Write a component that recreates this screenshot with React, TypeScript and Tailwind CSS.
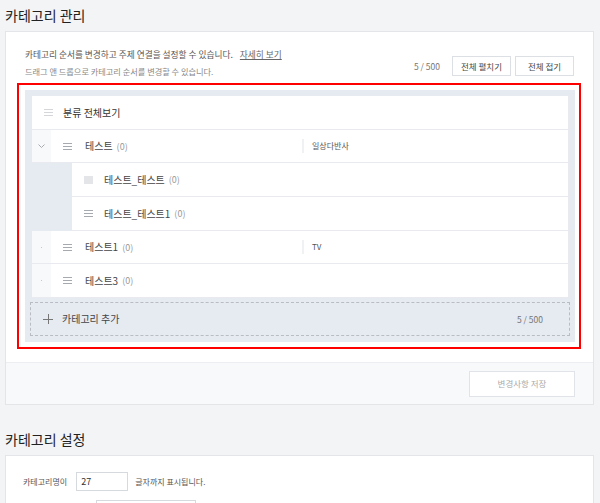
import React from "react";

const font = { fontFamily: '"Noto Sans CJK KR", "Noto Sans", sans-serif' };

const DragIcon = ({ light = false }: { light?: boolean }) => (
  <svg width="9" height="7" viewBox="0 0 9 7" className="shrink-0">
    <g stroke={light ? "#d4d6da" : "#a6a9ad"} strokeWidth="1">
      <line x1="0" y1="0.5" x2="9" y2="0.5" />
      <line x1="0" y1="3.5" x2="9" y2="3.5" />
      <line x1="0" y1="6.5" x2="9" y2="6.5" />
    </g>
  </svg>
);

type Row = {
  name: string;
  count?: string;
  topic?: string;
  child?: boolean;
  toggle?: "open" | "dot";
  square?: boolean;
  h: string;
};

const rows: Row[] = [
  { name: "테스트", count: "(0)", topic: "일상다반사", toggle: "open", h: "h-[33px]" },
  { name: "테스트_테스트", count: "(0)", child: true, square: true, h: "h-[34px]" },
  { name: "테스트_테스트1", count: "(0)", child: true, h: "h-[34px]" },
  { name: "테스트1", count: "(0)", topic: "TV", toggle: "dot", h: "h-[33px]" },
  { name: "테스트3", count: "(0)", toggle: "dot", h: "h-[34px]" },
];

const CategoryRow = ({ row }: { row: Row }) => {
  if (row.child) {
    return (
      <div className={`flex ${row.h} bg-[#e6eaf1]`}>
        <div className="ml-[40px] flex flex-1 items-center border-b border-[#e8eaef] bg-white pl-[12px]">
          {row.square ? (
            <span className="block h-[8px] w-[9px] bg-[#e4e5e8]" />
          ) : (
            <DragIcon />
          )}
          <span className="ml-[11px] text-[10px] leading-none text-[#444]">{row.name}</span>
          <span className="ml-[4px] text-[9px] leading-none text-[#999]">{row.count}</span>
        </div>
      </div>
    );
  }
  return (
    <div className={`flex ${row.h} border-b border-[#e8eaef] bg-white`}>
      <div className="flex w-[19px] items-center justify-center bg-[#f8f9fb]">
        {row.toggle === "open" ? (
          <svg width="7" height="4" viewBox="0 0 7 4">
            <path d="M0.5 0.5 L3.5 3.5 L6.5 0.5" fill="none" stroke="#a8abb0" strokeWidth="1" />
          </svg>
        ) : (
          <span className="block h-[1px] w-[1px] bg-[#c8c8c8]" />
        )}
      </div>
      <div className="flex flex-1 items-center">
        <div className="ml-[12px]">
          <DragIcon />
        </div>
        <div className="flex w-[230px] items-center pl-[13px]">
          <span className="text-[10px] leading-none text-[#444]">{row.name}</span>
          <span className="ml-[4px] text-[9px] leading-none text-[#999]">{row.count}</span>
        </div>
        {row.topic !== undefined && (
          <div className="flex items-center">
            <span className="block h-[14px] w-[2px] bg-[#f0f1f3]" />
            <span className="ml-[8px] text-[8px] leading-none text-[#555]">{row.topic}</span>
          </div>
        )}
      </div>
    </div>
  );
};

export default function App() {
  return (
    <div className="min-h-[503px] w-[600px] overflow-hidden bg-[#f3f4f6] pl-[5px]" style={font}>
      <h2 className="flex h-[31px] items-center text-[14px] font-normal text-[#222]">
        카테고리 관리
      </h2>

      <div className="w-[589px] border border-[#e3e5e9] bg-white">
        <div className="flex items-end justify-between pl-[19px] pr-[19px] pt-[15px]">
          <div>
            <p className="text-[8.7px] leading-[16px] text-[#555]">
              카테고리 순서를 변경하고 주제 연결을 설정할 수 있습니다.
              <a className="ml-[7px] text-[#666] underline">자세히 보기</a>
            </p>
            <p className="mt-[1px] text-[8.2px] leading-[14px] text-[#888]">
              드래그 앤 드롭으로 카테고리 순서를 변경할 수 있습니다.
            </p>
          </div>
          <div className="mb-[2px] flex items-center">
            <span className="mr-[12px] text-[8.5px] text-[#777]">5 / 500</span>
            <button className="h-[20px] w-[59px] border border-[#dcdfe4] bg-white text-[8.5px] text-[#444]">
              전체 펼치기
            </button>
            <button className="ml-[4px] h-[20px] w-[59px] border border-[#dcdfe4] bg-white text-[8.5px] text-[#444]">
              전체 접기
            </button>
          </div>
        </div>

        <div className="mb-[13px] ml-[11px] mt-[5px] w-[564px] border-2 border-[#ff0000] py-[5px] pl-[6px] pr-[4px]">
          <div className="bg-[#e6eaf1] p-[6px]">
            <div className="border-l border-r border-[#e8eaef]">
              <div className="flex h-[34px] items-center border-b border-[#e8eaef] bg-white pl-[12px]">
                <DragIcon light />
                <span className="ml-[10px] text-[10px] leading-none text-[#333]">분류 전체보기</span>
              </div>
              {rows.map((r) => (
                <CategoryRow key={r.name} row={r} />
              ))}
            </div>
            <div className="-mx-px mt-[4px] flex h-[34px] items-center justify-between border border-dashed border-[#b9bcc2] pl-[12px] pr-[26px]">
              <div className="flex items-center">
                <svg width="10" height="10" viewBox="0 0 10 10">
                  <g stroke="#777" strokeWidth="1">
                    <line x1="5.5" y1="0" x2="5.5" y2="10" />
                    <line x1="0" y1="5.5" x2="10" y2="5.5" />
                  </g>
                </svg>
                <span className="ml-[9px] text-[10px] leading-none text-[#444]">카테고리 추가</span>
              </div>
              <span className="text-[8.5px] text-[#777]">5 / 500</span>
            </div>
          </div>
        </div>

        <div className="flex h-[42px] items-center justify-end border-t border-[#eceef1] bg-[#f8f9fa] pr-[18px]">
          <button className="h-[26px] w-[106px] border border-[#e0e3e7] bg-white text-[8.5px] text-[#aaa]">
            변경사항 저장
          </button>
        </div>
      </div>

      <h2 className="mt-[19px] flex h-[31px] items-center text-[14px] font-normal text-[#222]">
        카테고리 설정
      </h2>

      <div className="h-[60px] w-[589px] border border-[#e3e5e9] bg-white pl-[17px] pt-[16px]">
        <div className="flex items-center">
          <span className="text-[8px] text-[#555]">카테고리명이</span>
          <span className="ml-[9px] flex h-[19px] w-[52px] items-center border border-[#d6d9de] pl-[4px] text-[9px] text-[#333]">
            27
          </span>
          <span className="ml-[7px] text-[8px] text-[#555]">글자까지 표시됩니다.</span>
        </div>
        <div className="ml-[73px] mt-[9px] h-[19px] w-[100px] border border-[#d6d9de]" />
      </div>
    </div>
  );
}
